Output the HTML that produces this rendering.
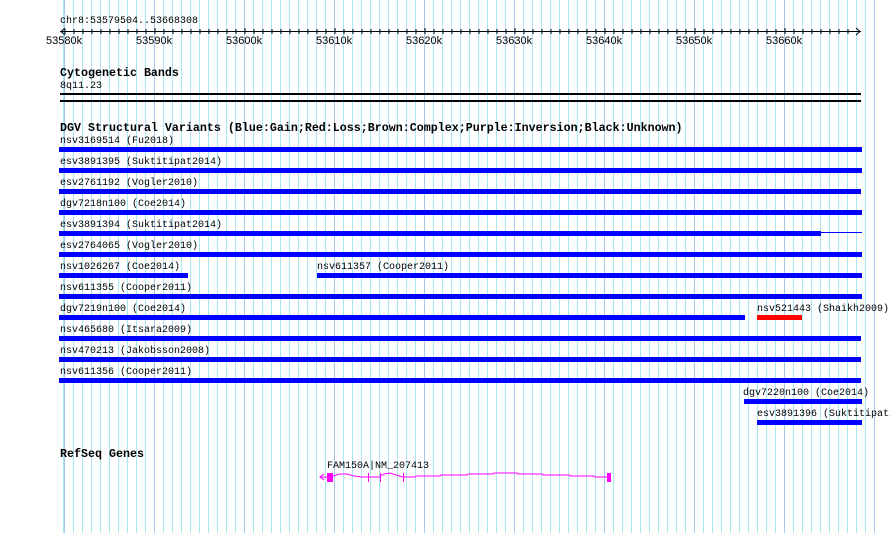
<!DOCTYPE html>
<html><head><meta charset="utf-8"><style>
html,body{margin:0;padding:0}
body{width:890px;height:533px;position:relative;overflow:hidden;background:#fff;font-family:"Liberation Mono",monospace;}
#grid{position:absolute;left:59px;top:0;width:820px;height:533px;
background-image:repeating-linear-gradient(to right,#a6c8ec 0,#a6c8ec 1px,transparent 1px,transparent 90px),
repeating-linear-gradient(to right,#a8e8f0 0,#a8e8f0 1px,transparent 1px,transparent 9px);
background-position:5px 0,5px 0;}
.t{position:absolute;font-size:10px;line-height:11px;color:#000;white-space:nowrap;margin-top:2px}
.h{position:absolute;font-size:11.67px;line-height:12px;font-weight:bold;color:#000;white-space:nowrap;}
.b{position:absolute;height:5px;background:#0000ff;}
.n{position:absolute;font-family:"Liberation Sans",sans-serif;font-size:11px;line-height:11px;white-space:nowrap;}
.hl{position:absolute;left:60px;width:801px;height:2px;background:#000;}
</style></head><body>
<div id="grid"></div>
<div class="t" style="left:60px;top:14px">chr8:53579504..53668308</div>
<svg style="position:absolute;left:0;top:0" width="890" height="50">
<line x1="60" y1="31.5" x2="861" y2="31.5" stroke="#000"/>
<polyline points="65,28 61,31.5 65,35" fill="none" stroke="#000"/>
<polyline points="856,28 860,31.5 856,35" fill="none" stroke="#000"/>
<g stroke="#000">
<path d="M65 29v5M74 29v5M83 29v5M92 29v5M101 29v5M110 29v5M119 29v5M128 29v5M137 29v5M146 29v5M155 28v6M164 29v5M173 29v5M182 29v5M191 29v5M200 29v5M209 29v5M218 29v5M227 29v5M236 29v5M245 28v6M254 29v5M263 29v5M272 29v5M281 29v5M290 29v5M299 29v5M308 29v5M317 29v5M326 29v5M335 28v6M344 29v5M353 29v5M362 29v5M371 29v5M380 29v5M389 29v5M398 29v5M407 29v5M416 29v5M425 28v6M434 29v5M443 29v5M452 29v5M461 29v5M470 29v5M479 29v5M488 29v5M497 29v5M506 29v5M515 28v6M524 29v5M533 29v5M542 29v5M551 29v5M560 29v5M569 29v5M578 29v5M587 29v5M596 29v5M605 28v6M614 29v5M623 29v5M632 29v5M641 29v5M650 29v5M659 29v5M668 29v5M677 29v5M686 29v5M695 28v6M704 29v5M713 29v5M722 29v5M731 29v5M740 29v5M749 29v5M758 29v5M767 29v5M776 29v5M785 28v6M794 29v5M803 29v5M812 29v5M821 29v5M830 29v5M839 29v5M848 29v5"/>
</g></svg>
<div class="n" style="left:46px;top:36px">53580k</div>
<div class="n" style="left:136px;top:36px">53590k</div>
<div class="n" style="left:226px;top:36px">53600k</div>
<div class="n" style="left:316px;top:36px">53610k</div>
<div class="n" style="left:406px;top:36px">53620k</div>
<div class="n" style="left:496px;top:36px">53630k</div>
<div class="n" style="left:586px;top:36px">53640k</div>
<div class="n" style="left:676px;top:36px">53650k</div>
<div class="n" style="left:766px;top:36px">53660k</div>

<div class="h" style="left:60px;top:67px">Cytogenetic Bands</div>
<div class="t" style="left:60px;top:79px">8q11.23</div>
<div class="hl" style="top:93px"></div>
<div class="hl" style="top:100px"></div>

<div class="h" style="left:60px;top:122px">DGV Structural Variants (Blue:Gain;Red:Loss;Brown:Complex;Purple:Inversion;Black:Unknown)</div>

<div class="t" style="left:60px;top:134px">nsv3169514 (Fu2018)</div><div class="b" style="left:59px;top:147px;width:803px"></div>
<div class="t" style="left:60px;top:155px">esv3891395 (Suktitipat2014)</div><div class="b" style="left:59px;top:168px;width:803px"></div>
<div class="t" style="left:60px;top:176px">esv2761192 (Vogler2010)</div><div class="b" style="left:59px;top:189px;width:802px"></div>
<div class="t" style="left:60px;top:197px">dgv7218n100 (Coe2014)</div><div class="b" style="left:59px;top:210px;width:803px"></div>
<div class="t" style="left:60px;top:218px">esv3891394 (Suktitipat2014)</div><div class="b" style="left:59px;top:231px;width:762px"></div><div style="position:absolute;left:821px;top:232px;width:41px;height:1px;background:#0000ff"></div>
<div class="t" style="left:60px;top:239px">esv2764065 (Vogler2010)</div><div class="b" style="left:59px;top:252px;width:803px"></div>
<div class="t" style="left:60px;top:260px">nsv1026267 (Coe2014)</div><div class="b" style="left:59px;top:273px;width:129px"></div>
<div class="t" style="left:317px;top:260px">nsv611357 (Cooper2011)</div><div class="b" style="left:317px;top:273px;width:545px"></div>
<div class="t" style="left:60px;top:281px">nsv611355 (Cooper2011)</div><div class="b" style="left:59px;top:294px;width:803px"></div>
<div class="t" style="left:60px;top:302px">dgv7219n100 (Coe2014)</div><div class="b" style="left:59px;top:315px;width:686px"></div>
<div class="t" style="left:757px;top:302px">nsv521443 (Shaikh2009)</div><div class="b" style="left:757px;top:315px;width:45px;background:#ff0000"></div>
<div class="t" style="left:60px;top:323px">nsv465680 (Itsara2009)</div><div class="b" style="left:59px;top:336px;width:802px"></div>
<div class="t" style="left:60px;top:344px">nsv470213 (Jakobsson2008)</div><div class="b" style="left:59px;top:357px;width:802px"></div>
<div class="t" style="left:60px;top:365px">nsv611356 (Cooper2011)</div><div class="b" style="left:59px;top:378px;width:802px"></div>
<div class="t" style="left:743px;top:386px">dgv7220n100 (Coe2014)</div><div class="b" style="left:744px;top:399px;width:118px"></div>
<div class="t" style="left:757px;top:407px">esv3891396 (Suktitipat2014)</div><div class="b" style="left:757px;top:420px;width:105px"></div>

<div class="h" style="left:60px;top:448px">RefSeq Genes</div>
<div class="t" style="left:327px;top:459px">FAM150A|NM_207413</div>
<svg style="position:absolute;left:0;top:0" width="890" height="533">
<g stroke="#ff00ff" fill="#ff00ff">
<polyline points="324,474 320,477 324,480" fill="none"/>
<line x1="320" y1="477" x2="327" y2="477"/>
<rect x="327" y="473" width="6" height="9" stroke="none"/>
<polyline points="333,476 340,474 347,474 354,476 362,477 368,477" fill="none"/>
<line x1="368.5" y1="473" x2="368.5" y2="482"/>
<polyline points="368,477 374,477 380,477" fill="none"/>
<line x1="380.5" y1="473" x2="380.5" y2="482"/>
<polyline points="380,476 384,474 390,473 396,475 403,477" fill="none"/>
<line x1="403.5" y1="473" x2="403.5" y2="482"/>
<polyline points="403,477 415,477 416,476 440,476 441,475 467,475 468,474 493,474 494,473 517,473 518,474 542,474 543,475 569,475 570,476 594,476 595,477 607,477" fill="none"/>
<rect x="607" y="473" width="4" height="9" stroke="none"/>
</g></svg>
</body></html>
